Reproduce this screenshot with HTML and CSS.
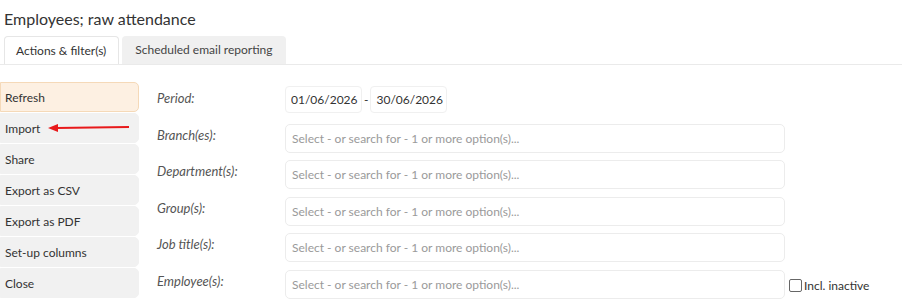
FILE: index.html
```html
<!DOCTYPE html>
<html lang="en">
<head>
  <meta charset="UTF-8">
  <title>Employees; raw attendance</title>
  <link rel="stylesheet" href="styles.css">
</head>
<body>
  <h1 class="page-title">Employees; raw attendance</h1>

  <div class="tabs">
    <div class="tab active">Actions &amp; filter(s)</div>
    <div class="tab">Scheduled email reporting</div>
  </div>

  <div class="panel">
    <div class="actions">
      <button class="action current">Refresh</button>
      <button class="action">Import
        <svg class="arrow" width="84" height="10" viewBox="0 0 84 10">
          <line x1="8" y1="5" x2="81" y2="4" stroke="#e8191b" stroke-width="2"/>
          <polygon points="0,5 10,1 10,9" fill="#e8191b"/>
        </svg>
      </button>
      <button class="action">Share</button>
      <button class="action">Export as CSV</button>
      <button class="action">Export as PDF</button>
      <button class="action">Set-up columns</button>
      <button class="action">Close</button>
    </div>

    <div class="filters">
      <label class="f-label">Period:</label>
      <div class="f-field period">
        <input class="date" type="text" value="01/06/2026">
        <span class="dash">-</span>
        <input class="date" type="text" value="30/06/2026">
      </div>

      <label class="f-label">Branch(es):</label>
      <div class="f-field"><input class="select" type="text" placeholder="Select - or search for - 1 or more option(s)..."></div>

      <label class="f-label">Department(s):</label>
      <div class="f-field"><input class="select" type="text" placeholder="Select - or search for - 1 or more option(s)..."></div>

      <label class="f-label">Group(s):</label>
      <div class="f-field"><input class="select" type="text" placeholder="Select - or search for - 1 or more option(s)..."></div>

      <label class="f-label">Job title(s):</label>
      <div class="f-field"><input class="select" type="text" placeholder="Select - or search for - 1 or more option(s)..."></div>

      <label class="f-label">Employee(s):</label>
      <div class="f-field">
        <input class="select" type="text" placeholder="Select - or search for - 1 or more option(s)...">
        <label class="check"><span class="box"></span>Incl. inactive</label>
      </div>
    </div>
  </div>
</body>
</html>
```

FILE: styles.css
```css
body {
  font-family: Lato, "Open Sans", sans-serif;
  color: #333;
  background: #fff;
  margin: 0;
  overflow: hidden;
}
.page-title {
  font-size: 16px;
  font-weight: normal;
  margin: 0;
  padding: 9px 0 0 4px;
  height: 27px;
}
.tabs {
  display: flex;
  gap: 3px;
  padding-left: 4px;
  border-bottom: 1px solid #eaeaea;
  height: 28px;
}
.tab {
  font-size: 12px;
  padding: 0 13px;
  line-height: 28px;
  background: #f0f0f0;
  color: #444;
  border-radius: 4px 4px 0 0;
}
.tab.active {
  background: #fff;
  border: 1px solid #e6e6e6;
  border-bottom: none;
  line-height: 27px;
  color: #333;
  padding: 0 12px 0 11px;
}
.panel {
  display: flex;
  margin-top: 17px;
}
.actions {
  width: 139px;
  display: flex;
  flex-direction: column;
  gap: 1px;
}
.action {
  position: relative;
  height: 30px;
  text-align: left;
  font-family: inherit;
  font-size: 12px;
  color: #333;
  padding: 0 4px;
  background: #f1f1f1;
  border: 1px solid #f1f1f1;
  border-radius: 0 5px 5px 0;
}
.action.current {
  background: #fdf0e2;
  border-color: #f5d9b8;
}
.arrow {
  position: absolute;
  left: 47px;
  top: 9px;
}
.filters {
  display: grid;
  grid-template-columns: 128px 500px;
  grid-auto-rows: 29px;
  row-gap: 7.5px;
  padding-left: 18px;
  padding-top: 5px;
}
.f-label {
  font-size: 13px;
  font-style: italic;
  color: #555;
  line-height: 22px;
}
.f-field {
  display: flex;
  align-items: center;
  position: relative;
}
.f-field.period {
  align-items: flex-start;
  margin-top: -1px;
}
.date {
  width: 77px;
  height: 27px;
  box-sizing: border-box;
  border: 1px solid #f0f0f0;
  border-radius: 4px;
  font-family: inherit;
  font-size: 12px;
  color: #333;
  padding: 0 3px 0 5px;
}
.dash {
  font-size: 12px;
  line-height: 27px;
  margin: 0 2px;
}
.select {
  width: 500px;
  height: 29px;
  box-sizing: border-box;
  border: 1px solid #ececec;
  border-radius: 5px;
  font-family: inherit;
  font-size: 12px;
  padding: 0 6px;
}
.select::placeholder {
  color: #9a9a9a;
}
.check {
  position: absolute;
  left: 504px;
  top: 8px;
  display: flex;
  align-items: center;
  font-size: 12px;
  color: #333;
  white-space: nowrap;
}
.box {
  width: 11px;
  height: 11px;
  border: 1px solid #666;
  border-radius: 2px;
  margin-right: 2px;
}
```
